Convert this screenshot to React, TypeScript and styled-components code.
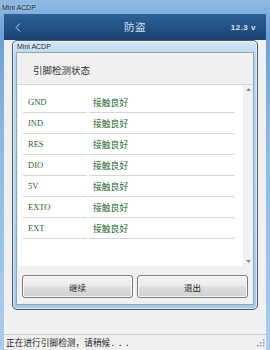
import React from "react";
import styled, { createGlobalStyle } from "styled-components";

const Global = createGlobalStyle`
  html, body { margin: 0; padding: 0; width: 270px; height: 350px; overflow: hidden; }
  body { font-family: "Liberation Sans", "Noto Sans CJK SC", sans-serif; }
`;

const CJK = `"Noto Sans CJK SC", "Liberation Sans", sans-serif`;

const Window = styled.div`
  width: 270px;
  height: 350px;
  box-sizing: border-box;
  padding: 0 4px;
  display: flex;
  flex-direction: column;
  background: linear-gradient(180deg, #8db8e2 0%, #6f9fd4 10%, #8cb9e3 40%, #a9cdee 100%);
`;

const TitleBar = styled.div`
  height: 14px;
  display: flex;
  align-items: center;
  font-size: 7px;
  color: #0d1a2a;
  text-shadow: 0 0 3px #e8f2fc;
  margin-left: -2px;
`;

const Client = styled.div`
  flex: 1;
  display: flex;
  flex-direction: column;
  background: #f0f0f0;
  min-height: 0;
`;

const Header = styled.div`
  height: 26px;
  display: grid;
  grid-template-columns: 40px 1fr 40px;
  align-items: center;
  background: linear-gradient(180deg, #2f6299 0%, #245487 45%, #1b4373 100%);
  color: #dfe7ef;
`;

const Back = styled.div`
  padding-left: 11px;
  display: flex;
  align-items: center;
`;

const HeaderTitle = styled.div`
  text-align: center;
  font-family: ${CJK};
  font-size: 10.5px;
  letter-spacing: 0.5px;
  line-height: 1;
  color: #d8e2ec;
`;

const Version = styled.div`
  font-size: 8px;
  font-weight: bold;
  text-align: right;
  padding-right: 10px;
  white-space: nowrap;
  letter-spacing: 0.5px;
`;

const Main = styled.div`
  padding: 0 8px;
  height: 270px;
`;

const Dialog = styled.div`
  height: 270px;
  box-sizing: border-box;
  border: 1px solid #4a5664;
  border-radius: 5px;
  padding: 11px 3px 4px 3px;
  display: flex;
  flex-direction: column;
  position: relative;
  background: linear-gradient(180deg, #d2e5f6 0%, #bad5ef 6%, #b3d0ed 60%, #a8c9ea 100%);
  box-shadow: inset 0 0 0 1px rgba(255, 255, 255, 0.6);
`;

const DialogTitle = styled.div`
  position: absolute;
  top: 2px;
  left: 4px;
  font-size: 7px;
  color: #1a2430;
  text-shadow: 0 0 3px #ffffff;
`;

const Inner = styled.div`
  flex: 1;
  border: 1px solid #8fa6bc;
  background: #f0f0f0;
  display: flex;
  flex-direction: column;
  min-height: 0;
`;

const Heading = styled.div`
  height: 32px;
  box-sizing: border-box;
  border-bottom: 1px solid #d4d4d4;
  padding: 11px 0 0 16px;
  font-family: ${CJK};
  font-size: 9.5px;
  color: #333;
  line-height: 12px;
`;

const List = styled.div`
  height: 181px;
  margin: 0 1px;
  background: #ffffff;
  display: flex;
`;

const Rows = styled.div`
  flex: 1;
  padding: 7px 8px 0 5px;
  display: flex;
  flex-direction: column;
`;

const Row = styled.div`
  display: grid;
  grid-template-columns: 64px 1fr;
  column-gap: 2px;
  height: 21px;
`;

const Cell = styled.div<{ $serif?: boolean }>`
  border-bottom: 1px solid #d6d6d6;
  display: flex;
  align-items: center;
  padding-left: ${(p) => (p.$serif ? "5px" : "4px")};
  color: #24692a;
  font-family: ${(p) => (p.$serif ? `"Liberation Serif", serif` : CJK)};
  font-size: ${(p) => (p.$serif ? "8.5px" : "8.8px")};
`;

const Scrollbar = styled.div`
  width: 8px;
  background: #f2f2f2;
  border-left: 1px solid #ececec;
  display: flex;
  flex-direction: column;
  justify-content: space-between;
  align-items: center;
  padding: 3px 0;
`;

const Buttons = styled.div`
  flex: 1;
  display: grid;
  grid-template-columns: 1fr 1fr;
  column-gap: 4px;
  padding: 9px 5px 6px 5px;
`;

const Button = styled.div`
  border: 1px solid #7a7a7a;
  border-radius: 3px;
  background: linear-gradient(180deg, #f4f4f4 0%, #ebebeb 45%, #dcdcdc 55%, #d0d0d0 100%);
  box-shadow: inset 0 0 0 1px #fbfbfb;
  display: flex;
  align-items: center;
  justify-content: center;
  font-family: ${CJK};
  font-size: 8.5px;
  color: #2a2a2a;
`;

const Spacer = styled.div`
  flex: 1;
`;

const StatusBar = styled.div`
  height: 16px;
  box-sizing: border-box;
  border-top: 1px solid #c9c9c9;
  background: #f0f0f0;
  display: flex;
  align-items: center;
  justify-content: space-between;
  padding: 0 1px 0 2px;
  font-family: ${CJK};
  font-size: 8.7px;
  color: #1c1c1c;
`;

const Dots = styled.span`
  letter-spacing: 2px;
  font-family: "Liberation Mono", monospace;
`;

const Arrow = ({ up }: { up?: boolean }) => (
  <svg width="5" height="3" viewBox="0 0 5 3">
    <polygon points={up ? "2.5,0 5,3 0,3" : "0,0 5,0 2.5,3"} fill="#8a8a8a" />
  </svg>
);

const Grip = () => (
  <svg width="8" height="8" viewBox="0 0 8 8">
    {[
      [6, 0],
      [6, 3],
      [3, 3],
      [6, 6],
      [3, 6],
      [0, 6],
    ].map(([x, y], i) => (
      <rect key={i} x={x} y={y} width="1.5" height="1.5" fill="#9a9a9a" />
    ))}
  </svg>
);

const pins = ["GND", "IND", "RES", "DIO", "5V", "EXTO", "EXT"];

export default function App() {
  return (
    <>
      <Global />
      <Window>
        <TitleBar>Mini ACDP</TitleBar>
        <Client>
          <Header>
            <Back>
              <svg width="6" height="9" viewBox="0 0 6 9">
                <polyline points="5,0.5 1,4.5 5,8.5" fill="none" stroke="#c9d5e2" strokeWidth="1" />
              </svg>
            </Back>
            <HeaderTitle>防盗</HeaderTitle>
            <Version>12.3 v</Version>
          </Header>
          <Main>
            <Dialog>
              <DialogTitle>Mini ACDP</DialogTitle>
              <Inner>
                <Heading>引脚检测状态</Heading>
                <List>
                  <Rows>
                    {pins.map((p) => (
                      <Row key={p}>
                        <Cell $serif>{p}</Cell>
                        <Cell>接触良好</Cell>
                      </Row>
                    ))}
                  </Rows>
                  <Scrollbar>
                    <Arrow up />
                    <Arrow />
                  </Scrollbar>
                </List>
                <Buttons>
                  <Button>继续</Button>
                  <Button>退出</Button>
                </Buttons>
              </Inner>
            </Dialog>
          </Main>
          <Spacer />
          <StatusBar>
            <span>
              正在进行引脚检测，请稍候<Dots>...</Dots>
            </span>
            <Grip />
          </StatusBar>
        </Client>
      </Window>
    </>
  );
}
